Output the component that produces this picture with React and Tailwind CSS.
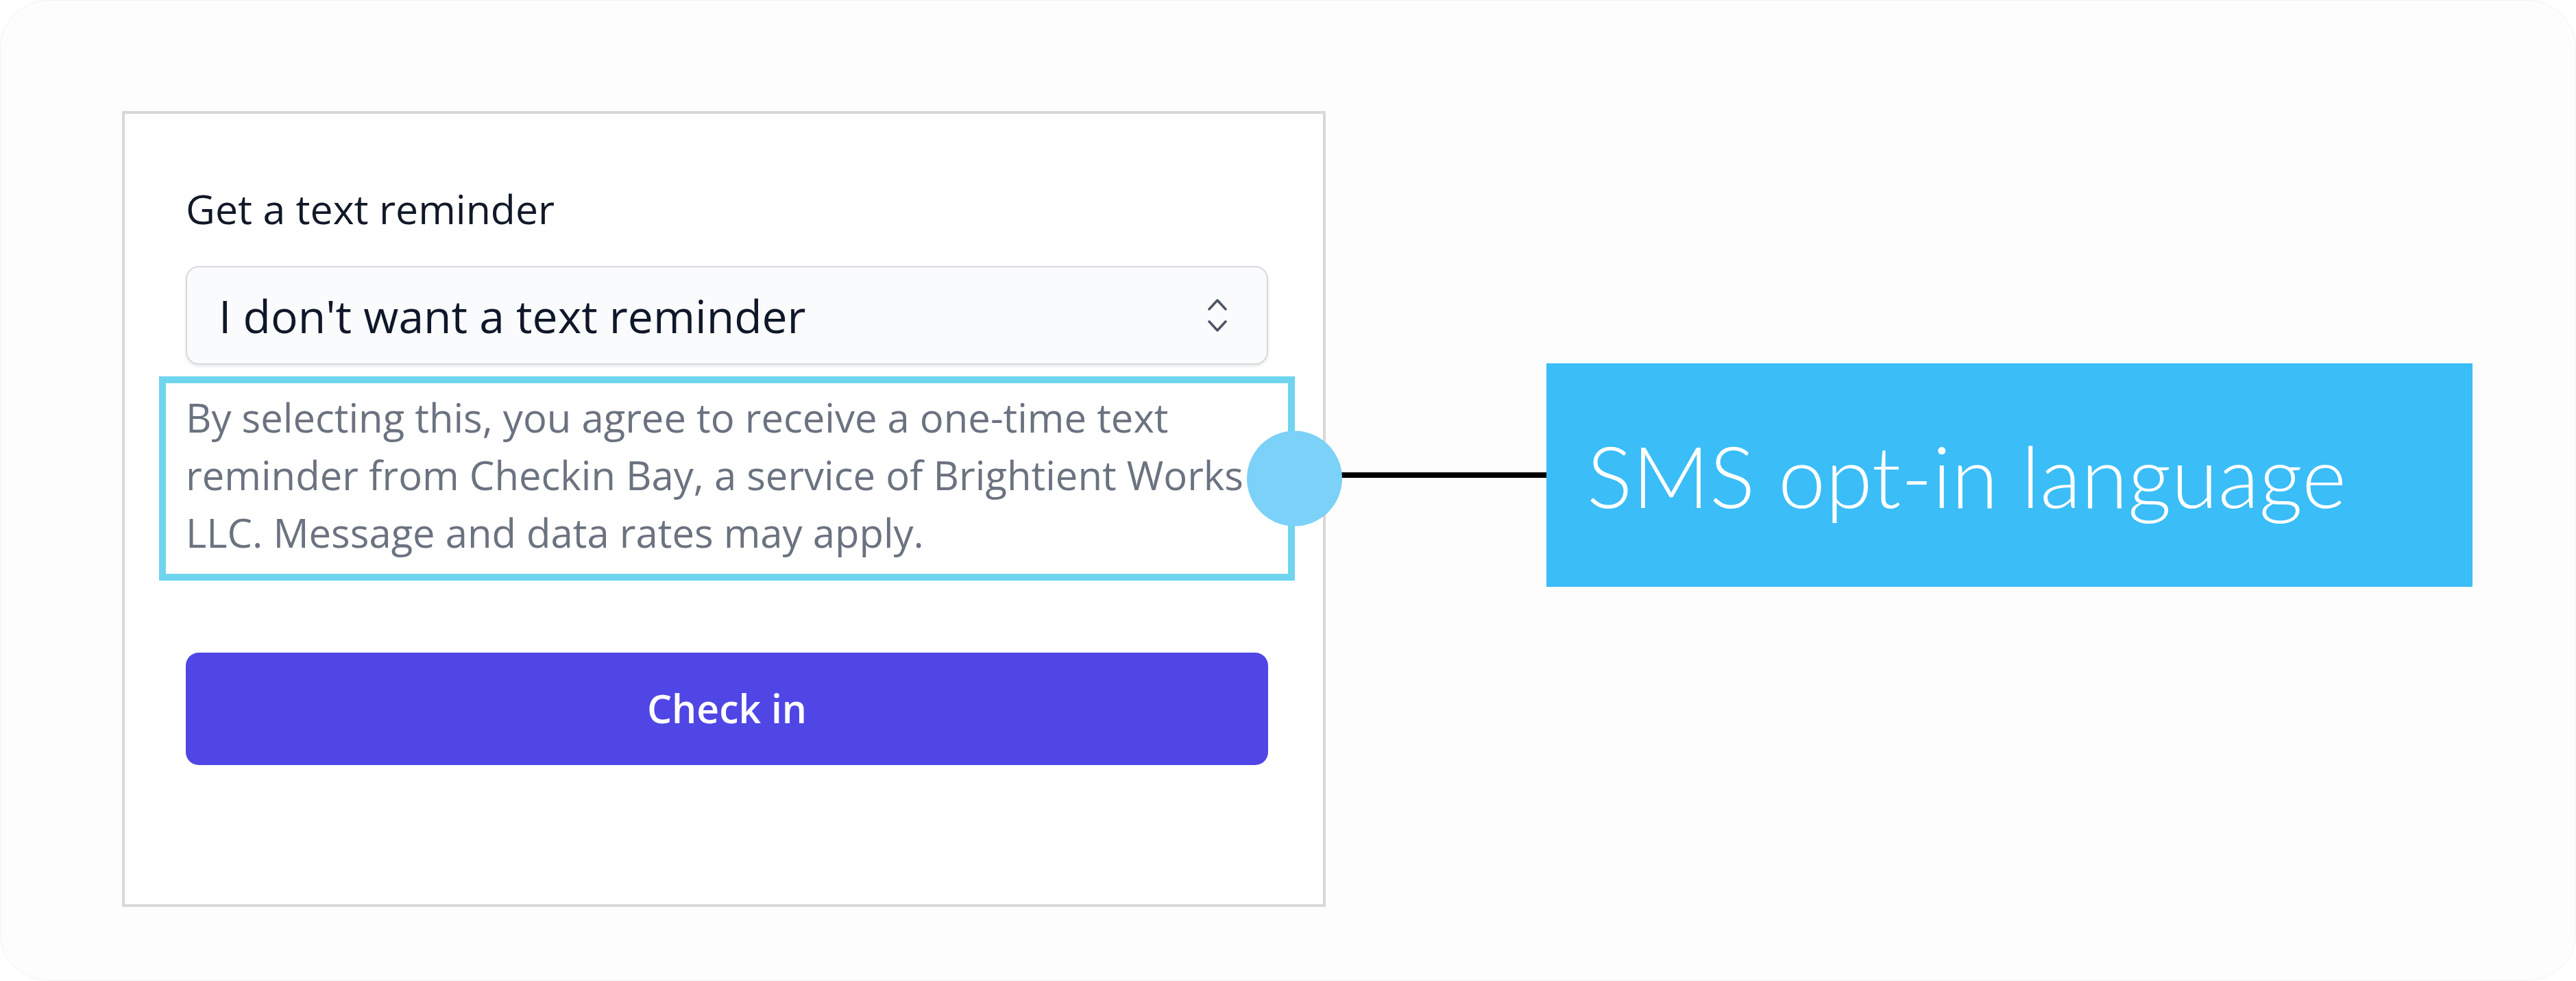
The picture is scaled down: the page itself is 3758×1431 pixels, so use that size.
export default function App() {
  return (
    <div className="h-[1431px] w-[3758px] bg-white font-['Open_Sans',sans-serif]">
      <div className="flex h-full w-full items-start rounded-[70px] border border-[#f3f3f4] bg-[#fdfdfd] pl-[177px] pt-[161px]">
        {/* form card */}
        <div className="h-[1161px] w-[1756px] shrink-0 border-[4px] border-[#d8d8d8] bg-white pl-[89px] pt-[108px]">
          <div className="w-[1579px]">
            <label className="block text-[59px] font-medium leading-[60px] text-[#111827]">
              Get a text reminder
            </label>

            <div className="mt-[54px] flex h-[144px] items-center justify-between rounded-[19px] border-2 border-[#d6d9de] bg-[#fafbfc] pl-[46px] pr-[55px] shadow-[0_3px_4px_rgba(0,0,0,0.08)]">
              <span className="text-[66px] leading-none text-[#0f172a]">
                I don't want a text reminder
              </span>
              <svg width="34" height="56" viewBox="0 0 34 56" fill="none">
                <polyline
                  points="5,19 17,6 29,19"
                  stroke="#4b5563"
                  strokeWidth="3.5"
                  strokeLinecap="round"
                  strokeLinejoin="round"
                />
                <polyline
                  points="5,37 17,50 29,37"
                  stroke="#4b5563"
                  strokeWidth="3.5"
                  strokeLinecap="round"
                  strokeLinejoin="round"
                />
              </svg>
            </div>

            <div className="relative -mx-[39px] mt-[17px] border-[10px] border-[#6fd4ee] bg-white pb-[18px] pl-[29px] pt-[8px]">
              <p className="text-[58px] leading-[84px] text-[#6b7280]">
                By selecting this, you agree to receive a one-time text reminder
                from Checkin Bay, a service of Brightient Works LLC. Message and
                data rates may apply.
              </p>
              <span className="absolute right-[-79px] top-1/2 h-[139px] w-[139px] -translate-y-1/2 rounded-full bg-[#7bd1f8]" />
            </div>

            <button className="mt-[105px] flex h-[164px] w-full items-center justify-center rounded-[19px] bg-[#4f46e5] text-[57px] font-semibold text-white">
              Check in
            </button>
          </div>
        </div>

        {/* callout */}
        <div className="mt-[368px] flex items-center">
          <div className="h-[8px] w-[322px] bg-black" />
          <div className="flex h-[326px] w-[1351px] items-center bg-[#3bbdf7] pl-[59px] font-['Lato',sans-serif] text-[124px] font-light text-white">
            SMS opt-in language
          </div>
        </div>
      </div>
    </div>
  );
}
